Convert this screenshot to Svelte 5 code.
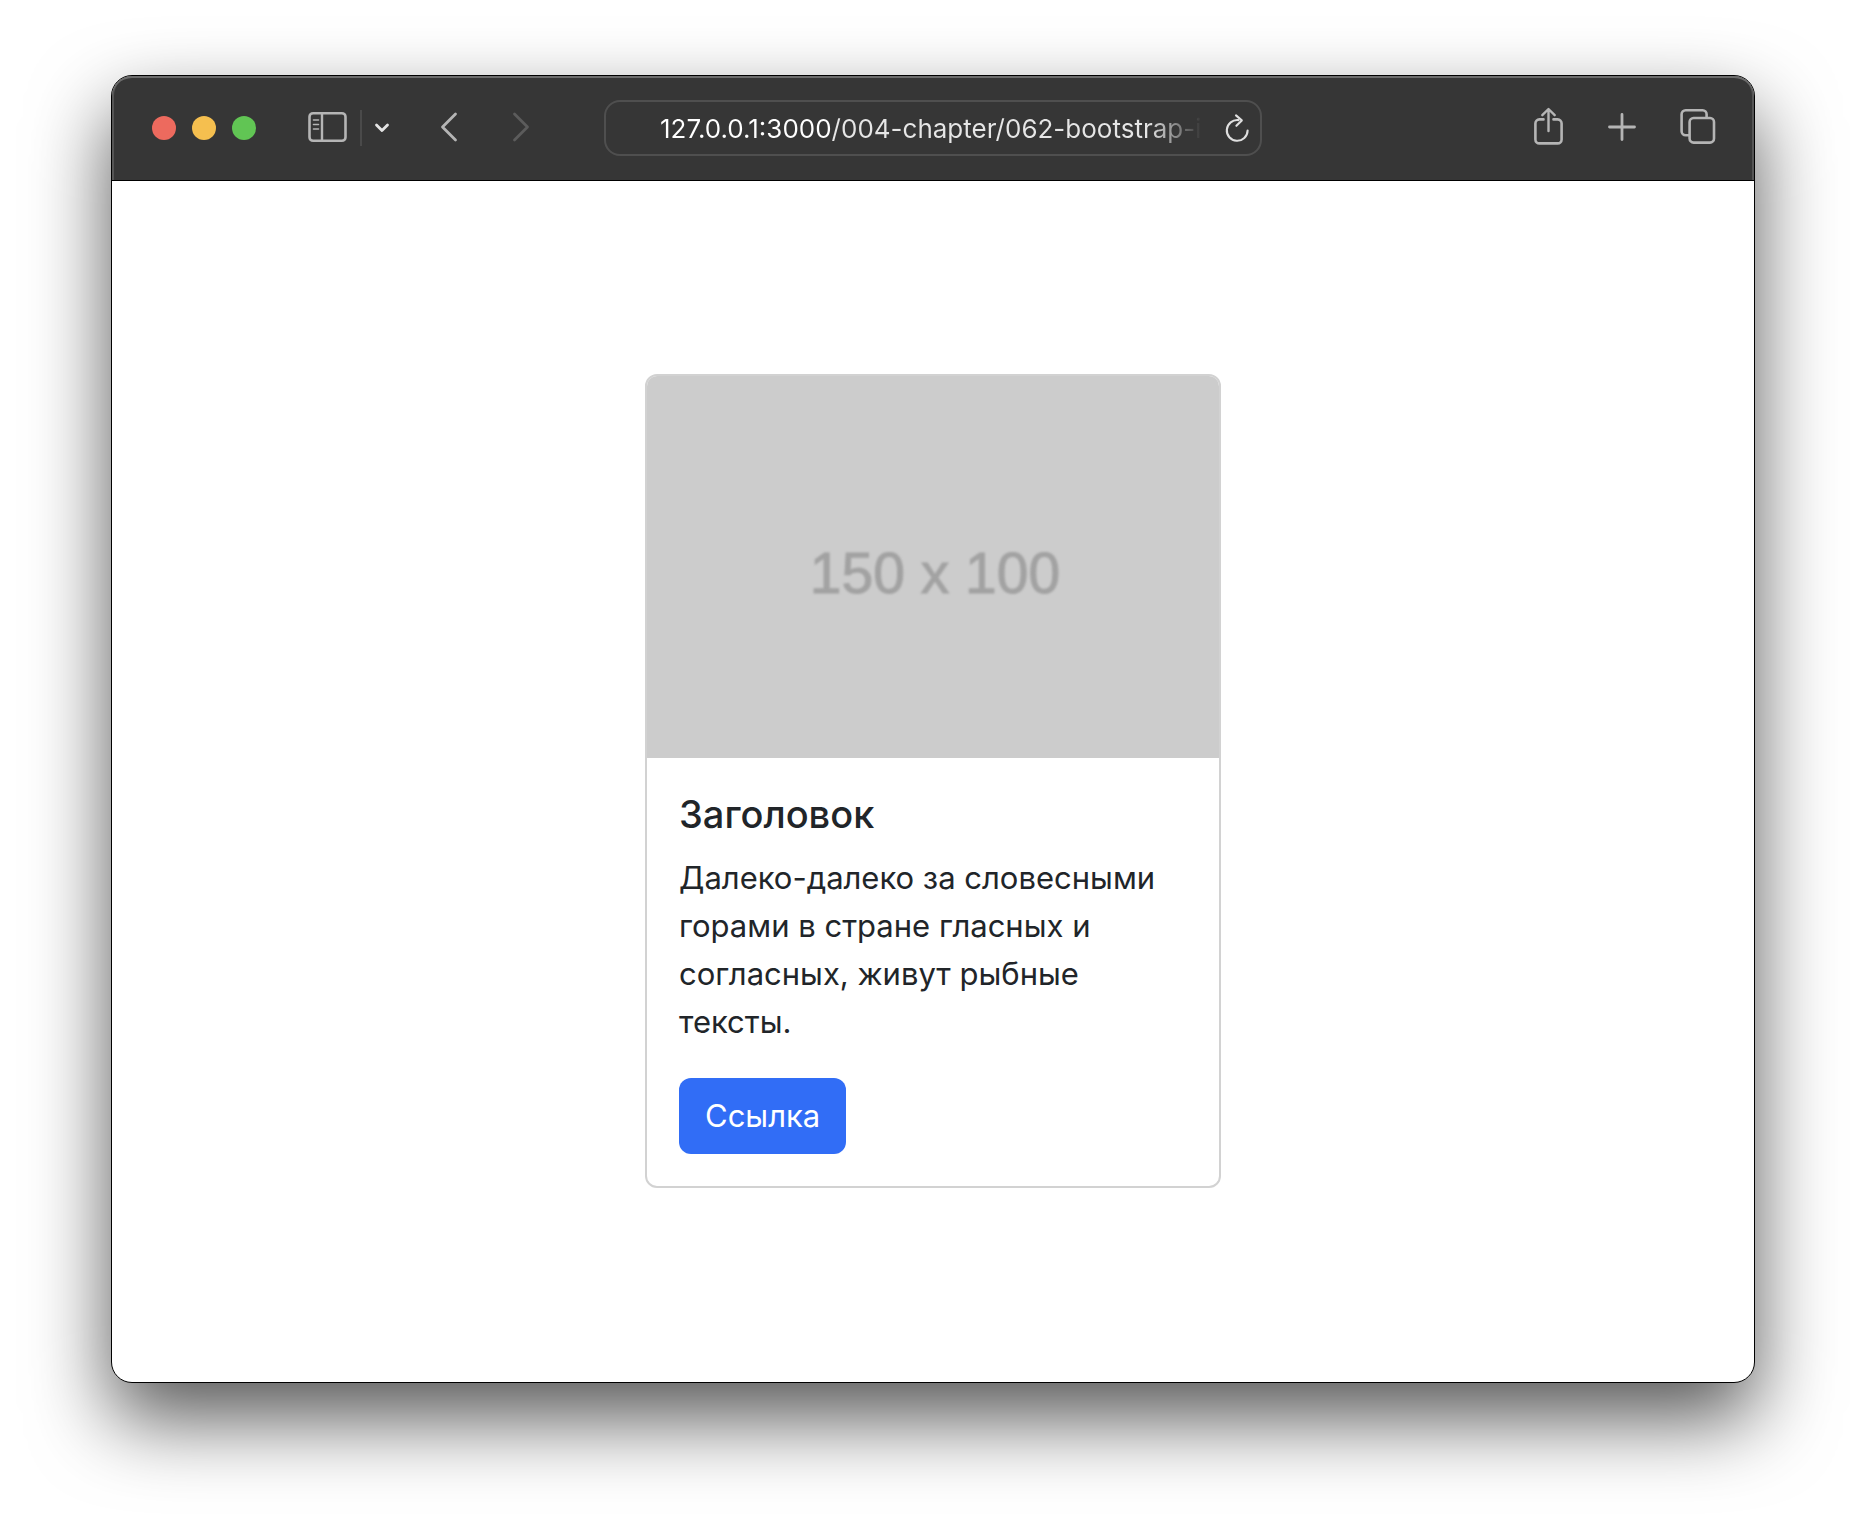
<script>
  let address = $state('127.0.0.1:3000/004-chapter/062-bootstrap-in');
</script>

<div class="desktop">
  <div class="window">
    <header class="toolbar">
      <div class="group">
        <div class="lights">
          <button class="light close" aria-label="Закрыть"></button>
          <button class="light minimize" aria-label="Свернуть"></button>
          <button class="light zoom" aria-label="Развернуть"></button>
        </div>
        <div class="sidebar">
          <button class="tool" aria-label="Боковое меню">
            <svg width="40" height="32" viewBox="0 1 40 32">
              <rect x="1.5" y="2.2" width="36" height="27.6" rx="3.6" stroke-width="2.6" />
              <path d="M14 2.5v27" stroke-width="2.4" />
              <path d="M5.5 9h5M5.5 13.5h5M5.5 18h5" stroke-width="1.6" />
            </svg>
          </button>
          <span class="divider"></span>
          <button class="tool bright" aria-label="Группы вкладок">
            <svg width="16" height="32" viewBox="0 1 16 32">
              <path d="M2.5 14L8 19.6L13.5 14" stroke-width="2.8" />
            </svg>
          </button>
        </div>
        <div class="history">
          <button class="tool" aria-label="Назад">
            <svg width="18" height="32" viewBox="0 1 18 32">
              <path d="M15.5 3L2.5 16L15.5 29" stroke-width="2.8" />
            </svg>
          </button>
          <button class="tool" aria-label="Вперёд" disabled>
            <svg width="18" height="32" viewBox="0 1 18 32">
              <path d="M2.5 3L15.5 16L2.5 29" stroke-width="2.8" />
            </svg>
          </button>
        </div>
      </div>

      <div class="address">
        <input type="text" aria-label="Адрес" bind:value={address} />
        <button class="tool reload" aria-label="Обновить">
          <svg width="26" height="32" viewBox="0 0 26 32">
            <path d="M14.5 8.1A10.4 10.4 0 1 0 23.6 18.6" stroke-width="2.1" />
            <path d="M12 3.4L17.8 8.4L12.4 13.8" stroke-width="2.1" />
          </svg>
        </button>
      </div>

      <div class="group actions">
        <button class="tool" aria-label="Поделиться">
          <svg width="32" height="40" viewBox="0 2 32 40">
            <path d="M11.5 13.4H7.4a4 4 0 0 0-4 4v16a4 4 0 0 0 4 4h18.2a4 4 0 0 0 4-4v-16a4 4 0 0 0-4-4h-4.1" stroke-width="2.6" />
            <path d="M16.5 25V3.2M10.3 9.2L16.5 3L22.7 9.2" stroke-width="2.4" />
          </svg>
        </button>
        <button class="tool" aria-label="Новая вкладка">
          <svg width="28" height="40" viewBox="0 1 28 40">
            <path d="M14 7.5v25M1.5 20h25" stroke-width="2.8" />
          </svg>
        </button>
        <button class="tool" aria-label="Обзор вкладок">
          <svg width="36" height="40" viewBox="0 1 36 40">
            <path d="M9 28.3H5.6a4 4 0 0 1-4-4V7.2a4 4 0 0 1 4-4h17a4 4 0 0 1 4 4v3.6" stroke-width="2.6" stroke-linecap="butt" />
            <rect x="9.6" y="11" width="24.4" height="24.6" rx="4" stroke-width="2.6" />
          </svg>
        </button>
      </div>
    </header>

    <main class="page">
      <article class="card">
        <div class="picture" role="img" aria-label="150 x 100"><span>150 x 100</span></div>
        <div class="body">
          <h5>Заголовок</h5>
          <p>Далеко-далеко за словесными горами в стране гласных и согласных, живут рыбные тексты.</p>
          <a class="btn" href="#link">Ссылка</a>
        </div>
      </article>
    </main>
  </div>
</div>

<style>
  :global(body) {
    margin: 0;
    background: #fff;
  }

  .desktop,
  .desktop * {
    box-sizing: border-box;
  }

  .desktop {
    display: flex;
    min-height: 100vh;
    padding: 75px 111px 147px;
    overflow: hidden;
    font-family: Inter, "Liberation Sans", sans-serif;
  }

  .window {
    flex: 1;
    min-width: 0;
    display: flex;
    flex-direction: column;
    border: 1px solid #000;
    border-radius: 21px;
    background: #fff;
    box-shadow: 0 36px 80px rgba(0, 0, 0, 0.66);
  }

  .toolbar {
    display: grid;
    grid-template-columns: 1fr minmax(0, 658px) 1fr;
    align-items: center;
    height: 105px;
    padding: 0 38px;
    background: #363636;
    border-bottom: 1px solid #000;
    border-radius: 20px 20px 0 0;
    box-shadow: inset 0 2px 0 #6c6c6c, inset 2px 0 0 #555, inset -2px 0 0 #555;
  }

  .group,
  .lights,
  .sidebar,
  .history {
    display: flex;
    align-items: center;
  }

  .lights {
    gap: 16px;
    padding-left: 2px;
  }

  .sidebar {
    gap: 12px;
    margin-left: 52px;
  }

  .history {
    gap: 54px;
    margin-left: 50px;
  }

  .actions {
    justify-content: flex-end;
    gap: 44px;
  }

  button {
    padding: 0;
    border: 0;
    background: none;
  }

  .light {
    width: 24px;
    height: 24px;
    border-radius: 50%;
  }

  .close {
    background: #ed6a5e;
  }

  .minimize {
    background: #f5bf4f;
  }

  .zoom {
    background: #61c554;
  }

  .tool {
    display: flex;
    color: #b5b5b5;
  }

  .tool:disabled {
    color: #5c5c5c;
  }

  .bright {
    color: #e4e4e4;
  }

  .reload {
    color: #dfdfdf;
  }

  svg {
    fill: none;
    stroke: currentColor;
    stroke-linecap: round;
    stroke-linejoin: round;
    overflow: visible;
  }

  .divider {
    width: 2px;
    height: 36px;
    background: #4a4a4a;
  }

  .address {
    display: flex;
    align-items: center;
    gap: 22px;
    height: 56px;
    padding: 0 10px 0 54px;
    border: 2px solid #4f4f4f;
    border-radius: 16px;
  }

  input {
    flex: 1;
    min-width: 0;
    height: 40px;
    padding: 0;
    border: 0;
    outline: 0;
    font-family: inherit;
    font-size: 26px;
    color: transparent;
    background: linear-gradient(90deg, #fff 171px, #e6e6e6 171px, #e6e6e6 calc(100% - 54px), #363636);
    background-clip: text;
    -webkit-background-clip: text;
  }

  .page {
    flex: 1;
    display: flex;
    align-items: center;
    justify-content: center;
    padding: 48px 48px 50px;
  }

  .card {
    width: 100%;
    max-width: 576px;
    border: 2px solid #d2d2d2;
    border-radius: 12px;
    overflow: hidden;
    color: #212529;
  }

  .picture {
    display: flex;
    align-items: center;
    justify-content: center;
    height: 382px;
    padding: 12px 0 0 4px;
    background: #ccc;
    color: #a2a2a2;
    font-family: "Liberation Sans", sans-serif;
    font-size: 57px;
  }

  .picture span {
    -webkit-text-stroke: 1px #a2a2a2;
    filter: blur(1px);
  }

  .body {
    padding: 32px;
  }

  h5 {
    margin: 0 0 16px;
    font-size: 38px;
    line-height: 48px;
    font-weight: 500;
  }

  p {
    margin: 0 0 32px;
    font-size: 31px;
    line-height: 48px;
  }

  .btn {
    display: inline-block;
    vertical-align: top;
    padding: 14px 26px;
    border-radius: 12px;
    background: #316df6;
    color: #fff;
    font-size: 31px;
    line-height: 48px;
    text-decoration: none;
  }
</style>
